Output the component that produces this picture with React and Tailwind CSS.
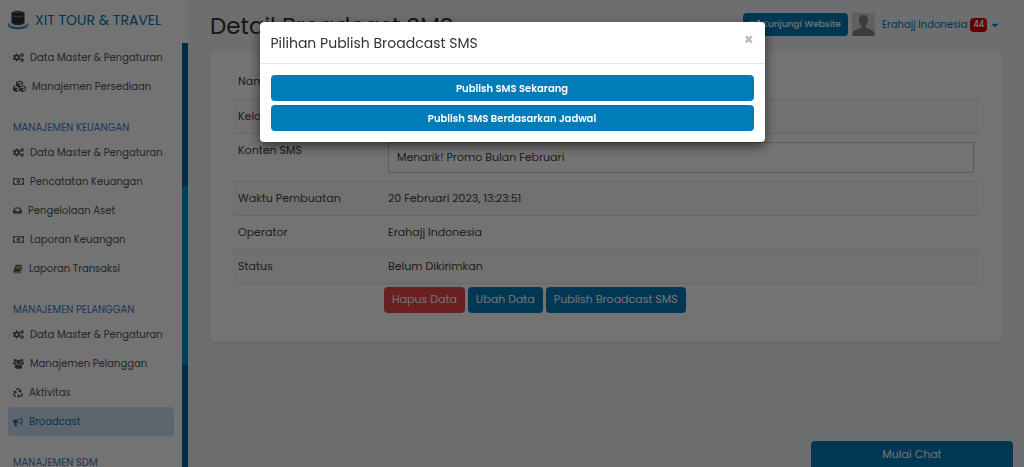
import React, { useState } from 'react';
import { FaCaretDown, FaCogs, FaCubes, FaExternalLinkAlt, FaInbox, FaRecycle } from 'react-icons/fa';

function BookIcon({ className }) {
  return (
    <svg viewBox="0 0 1792 1792" fill="currentColor" className={className} aria-hidden="true">
      <path d="M1703 478q40 57 18 129l-275 906q-19 64-76.500 107.500t-122.500 43.500h-923q-77 0-148.500-53.500t-99.500-131.500q-24-67-2-127 0-4 3-27t4-37q1-8-3-21.500t-3-19.500q2-11 8-21t16.500-23.500 16.500-23.500q23-38 45-91.500t30-91.500q3-10 .5-30t-.5-28q3-11 17-28t17-23q21-36 42-92t25-90q1-9-2.500-32t.5-28q4-13 22-30.500t22-22.500q19-26 42.500-84.500t27.500-96.500q1-8-3-25.500t-2-26.500q2-8 9-18t18-23 17-21q8-12 16.500-30.500t15-35 16-36 19.500-32 26.500-23.500 36-11.500 47.500 5.500l-1 3q38-9 51-9h761q74 0 114 56t18 130l-274 906q-36 119-71.500 153.500t-128.500 34.500h-869q-27 0-38 15-11 16-1 43 24 70 144 70h923q29 0 56-15.500t35-41.500l300-987q7-22 5-57 38 15 59 43zm-1064 2q-4 13 2 22.500t20 9.500h608q13 0 25.500-9.500t16.500-22.500l21-64q4-13-2-22.500t-20-9.500h-608q-13 0-25.500 9.500t-16.500 22.500zm-83 256q-4 13 2 22.500t20 9.500h608q13 0 25.500-9.500t16.500-22.500l21-64q4-13-2-22.500t-20-9.500h-608q-13 0-25.500 9.500t-16.500 22.500z" />
    </svg>
  );
}

function BullhornIcon({ className }) {
  return (
    <svg viewBox="0 0 1792 1792" fill="currentColor" className={className} aria-hidden="true">
      <path d="M1664 640q53 0 90.500 37.500t37.500 90.500-37.500 90.500-90.500 37.500v384q0 52-38 90t-90 38q-417-347-812-380-58 19-91 66t-31 100.500 40 92.500q-20 33-23 65.500t6 58 33.500 55 48 50 61.500 50.500q-29 58-111.500 83t-168.500 11.500-132-55.500q-7-23-29.500-87.500t-32-94.500-23-89-15-101 3.500-98.500 22-110.500h-122q-66 0-113-47t-47-113v-192q0-66 47-113t113-47h480q435 0 896-384 52 0 90 38t38 90v384zm-128 604v-954q-394 302-768 343v270q377 42 768 341z" />
    </svg>
  );
}

function MoneyIcon({ className }) {
  return (
    <svg viewBox="0 0 30 24" fill="currentColor" className={className} aria-hidden="true">
      <path fillRule="evenodd" d="M0 3h30v18H0zM6 5a4 4 0 0 1-4 4v6a4 4 0 0 1 4 4h18a4 4 0 0 1 4-4V9a4 4 0 0 1-4-4z" />
      <path fillRule="evenodd" d="M15 6c3 0 5 2.500 5 6s-2 6-5 6-5-2.500-5-6 2-6 5-6zm-.5 2.500-2 1.500 1 1 .7-.4V14h-1.700v1.500h5V14h-1.500V8.500z" />
    </svg>
  );
}

function UsersIcon({ className }) {
  return (
    <svg viewBox="0 0 30 28" fill="currentColor" className={className} aria-hidden="true">
      <circle cx="6" cy="6" r="4" />
      <circle cx="24" cy="6" r="4" />
      <circle cx="15" cy="10" r="6" />
      <path d="M3 10.500c2 1.200 4 1.200 5.200.6C8 14 9 15.500 10 16.500H3c-2 0-3-1-3-2.500 0-2 .8-5 3-3.500zM27 10.500c-2 1.200-4 1.200-5.200.6.200 2.900-.8 4.400-1.800 5.400h7c2 0 3-1 3-2.500 0-2-.8-5-3-3.500z" />
      <path d="M9.500 16c3 2.500 8 2.500 11 0 3.500 0 4.500 4 4.500 8 0 2.500-1.500 4-4 4H9c-2.500 0-4-1.500-4-4 0-4 1-8 4.500-8z" />
    </svg>
  );
}

function Logo() {
  return (
    <svg viewBox="0 0 22 20" className="mt-0.5 h-5 w-[22px] shrink-0" aria-hidden="true">
      <path d="M1 12.500C-1 17.500 5 19.500 11 19.500s12-2 10-7c-1 3.500-5 4.500-10 4.500s-9-1-10-4.500z" fill="#2f8fc9" />
      <path d="M2.500 12h17l-1 2.500q-7.500 3.500-15 0z" fill="#d6d6d9" />
      <path d="M4.500 2.500Q11-1 17.500 2.500V12q-1 3-6.500 3t-6.500-3z" fill="#333337" />
      <path d="M5.500 2.500Q11 0 16.500 2.500q-5.500 1-11 0z" fill="#6c6c70" />
      <path d="M4.500 5.500q6.500 1.500 13 0v1q-6.500 1.500-13 0z" fill="#7c7c80" />
    </svg>
  );
}

function Avatar() {
  return (
    <svg viewBox="0 0 23 23" className="size-[23px]" role="img" aria-label="Foto profil">
      <rect width="23" height="23" fill="#d4d4d4" />
      <path d="M11.500 2c3 0 4.600 2 4.500 5 0 2.500-1 4.200-2.200 5.400v2.200c1 1.400 8 1.800 8.700 5.900V23H.5v-2.500c.7-4.100 7.700-4.500 8.700-5.900v-2.200C8 11.200 7 9.500 7 7c-.1-3 1.500-5 4.500-5z" fill="#858585" />
    </svg>
  );
}

const menu = [
  {
    items: [
      { icon: FaCogs, size: 'size-[11px]', label: 'Data Master & Pengaturan' },
      { icon: FaCubes, size: 'size-[13px]', label: 'Manajemen Persediaan' },
    ],
  },
  {
    title: 'MANAJEMEN KEUANGAN',
    items: [
      { icon: FaCogs, size: 'size-[11px]', label: 'Data Master & Pengaturan' },
      { icon: MoneyIcon, size: 'size-[11px]', label: 'Pencatatan Keuangan' },
      { icon: FaInbox, size: 'size-[9px]', label: 'Pengelolaan Aset' },
      { icon: MoneyIcon, size: 'size-[11px]', label: 'Laporan Keuangan' },
      { icon: BookIcon, size: 'size-[10px]', label: 'Laporan Transaksi' },
    ],
  },
  {
    title: 'MANAJEMEN PELANGGAN',
    items: [
      { icon: FaCogs, size: 'size-[11px]', label: 'Data Master & Pengaturan' },
      { icon: UsersIcon, size: 'size-[11px]', label: 'Manajemen Pelanggan' },
      { icon: FaRecycle, size: 'size-[10px]', label: 'Aktivitas' },
      { icon: BullhornIcon, size: 'size-[10px]', label: 'Broadcast', active: true },
    ],
  },
  { title: 'MANAJEMEN SDM', items: [] },
];

const rows = [
  { label: 'Nama', value: '' },
  { label: 'Kelompok', value: '' },
  { label: 'Konten SMS', value: 'Menarik! Promo Bulan Februari', boxed: true },
  { label: 'Waktu Pembuatan', value: '20 Februari 2023, 13:23:51' },
  { label: 'Operator', value: 'Erahajj Indonesia' },
  { label: 'Status', value: 'Belum Dikirimkan' },
];

function Sidebar() {
  return (
    <aside className="flex w-[188px] shrink-0 flex-col bg-white">
      <a href="#beranda" className="flex h-[43px] shrink-0 items-start gap-1.5 pt-2 pl-[7px] text-[14px] leading-6 whitespace-nowrap text-[#0079b5]">
        <Logo />
        XIT TOUR &amp; TRAVEL
      </a>
      <div className="flex min-h-0 flex-1 justify-between">
        <nav className="w-[174px] overflow-hidden pl-2">
          {menu.map((group, i) => (
            <div key={i}>
              {group.title && (
                <h2 className="h-[37px] pt-[17px] pl-[5px] text-[10px] leading-5 whitespace-nowrap text-[#3f7ac4]">
                  {group.title}
                </h2>
              )}
              <ul>
                {group.items.map(({ icon: Icon, size, label, active }) => (
                  <li key={label}>
                    <a
                      href="#menu"
                      className={`flex h-[29px] items-center gap-1.5 rounded pl-[5px] text-[10px] whitespace-nowrap ${
                        active ? 'bg-[#cfe0f4] text-[#0079b5]' : 'text-[#555]'
                      }`}
                    >
                      <Icon className={`${size} shrink-0`} />
                      {label}
                    </a>
                  </li>
                ))}
              </ul>
            </div>
          ))}
        </nav>
        {/* Scroll track */}
        <div className="w-1.5 bg-[#00608f] pt-[143px]">
          <div className="h-[179px] bg-[#008bd0]" />
        </div>
      </div>
    </aside>
  );
}

function PublishModal({ onClose }) {
  return (
    <div className="fixed inset-0 bg-black/55 pt-[22px]">
      <div
        role="dialog"
        aria-modal="true"
        aria-labelledby="publish-title"
        className="mx-auto w-full max-w-[505px] rounded bg-white shadow-[0_4px_12px_rgba(0,0,0,0.6)]"
      >
        <div className="flex h-[42px] items-start justify-between border-b border-[#e5e5e5] px-[11px] pt-2.5">
          <h2 id="publish-title" className="text-[14px] leading-[22px] text-[#333]">
            Pilihan Publish Broadcast SMS
          </h2>
          <button type="button" aria-label="Tutup" onClick={onClose} className="text-[15px] leading-4 font-bold text-[#bbb]">
            ×
          </button>
        </div>
        <div className="flex flex-col gap-1 p-[11px]">
          <button type="button" className="h-[26px] rounded bg-[#007cb8] text-[10px] font-semibold text-white">
            Publish SMS Sekarang
          </button>
          <button type="button" className="h-[26px] rounded bg-[#007cb8] text-[10px] font-semibold text-white">
            Publish SMS Berdasarkan Jadwal
          </button>
        </div>
      </div>
    </div>
  );
}

export default function App() {
  const [modalOpen, setModalOpen] = useState(true);

  return (
    <div className="flex h-screen overflow-hidden bg-[#f0f4f9] font-['Poppins','Inter',sans-serif] text-[#444]">
      <Sidebar />

      <main className="min-w-0 flex-1 px-[22px]">
        <header className="flex h-[51px] items-start justify-between">
          <h1 className="pt-2.5 text-[23px] leading-8 whitespace-nowrap text-[#333]">Detail Broadcast SMS</h1>
          <div className="flex items-center pt-[13px] pr-0.5">
            <a href="#website" className="flex h-[23px] items-center gap-0.5 rounded-sm bg-[#007cb8] px-[7px] text-[9px] font-medium whitespace-nowrap text-white">
              <FaExternalLinkAlt className="size-2.5" />
              Kunjungi Website
            </a>
            <span className="pl-1">
              <Avatar />
            </span>
            <button type="button" className="flex items-center gap-[3px] pl-[7px] text-[10px] whitespace-nowrap text-[#0079b5]">
              Erahajj Indonesia
              <span className="rounded-sm bg-[#e00000] px-[3px] text-[8px] leading-[14px] font-semibold text-white">44</span>
              <FaCaretDown className="size-2.5" />
            </button>
          </div>
        </header>

        <section className="rounded bg-white px-[23px] pt-[14px] pb-[29px] shadow-sm">
          <table className="w-full text-left text-[11px]">
            <tbody>
              {rows.map((row) => (
                <tr key={row.label} className="border-b border-[#e6e6e6] even:bg-[#fafafa]">
                  <th scope="row" className="h-[34px] w-[150px] px-[5px] py-2 align-top leading-[17px] font-normal">
                    {row.boxed ? <label htmlFor="konten">{row.label}</label> : row.label}
                  </th>
                  <td className="px-[5px] py-2 align-top leading-[17px]">
                    {row.boxed ? (
                      <textarea
                        id="konten"
                        readOnly
                        defaultValue={row.value}
                        className="block h-[31px] w-full resize-none overflow-hidden border border-[#ccc] px-2 py-1.5"
                      />
                    ) : (
                      row.value
                    )}
                  </td>
                </tr>
              ))}
            </tbody>
          </table>
          <div className="flex gap-[3px] pt-[3px] pl-[151px] text-[11px] text-white">
            <button type="button" className="h-[26px] rounded-sm bg-[#e8474c] px-2">
              Hapus Data
            </button>
            <button type="button" className="h-[26px] rounded-sm bg-[#007cb8] px-2">
              Ubah Data
            </button>
            <button type="button" onClick={() => setModalOpen(true)} className="h-[26px] rounded-sm bg-[#007cb8] px-2">
              Publish Broadcast SMS
            </button>
          </div>
        </section>
      </main>

      <button type="button" className="fixed right-[11px] bottom-0 h-[26px] w-[202px] rounded-t-sm bg-[#007cb8] text-[11px] text-white">
        Mulai Chat
      </button>

      {modalOpen && <PublishModal onClose={() => setModalOpen(false)} />}
    </div>
  );
}
